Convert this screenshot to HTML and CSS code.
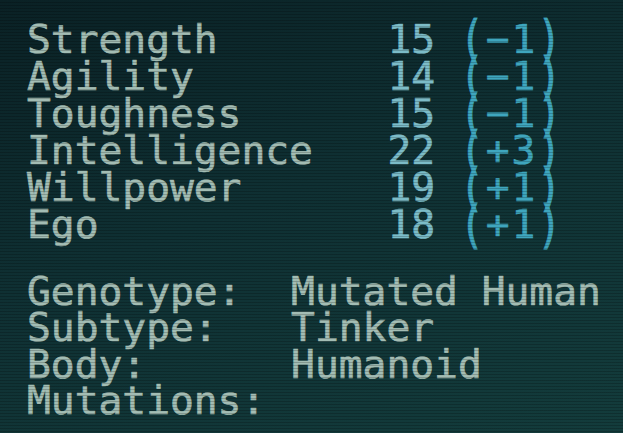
FILE: index.html
```html
<!DOCTYPE html>
<html>
<head>
<meta charset="utf-8">
<link rel="stylesheet" href="styles.css">
</head>
<body>
<main class="sheet">
  <section class="stats">
    <div class="label">Strength</div><div class="num">15</div><div class="mod"><span class="par">(</span>−1<span class="par">)</span></div>
    <div class="label">Agility</div><div class="num">14</div><div class="mod"><span class="par">(</span>−1<span class="par">)</span></div>
    <div class="label">Toughness</div><div class="num">15</div><div class="mod"><span class="par">(</span>−1<span class="par">)</span></div>
    <div class="label">Intelligence</div><div class="num">22</div><div class="mod"><span class="par">(</span>+3<span class="par">)</span></div>
    <div class="label">Willpower</div><div class="num">19</div><div class="mod"><span class="par">(</span>+1<span class="par">)</span></div>
    <div class="label">Ego</div><div class="num">18</div><div class="mod"><span class="par">(</span>+1<span class="par">)</span></div>
  </section>
  <section class="info">
    <div class="key">Genotype:</div><div class="val">Mutated Human</div>
    <div class="key">Subtype:</div><div class="val">Tinker</div>
    <div class="key">Body:</div><div class="val">Humanoid</div>
    <div class="key">Mutations:</div><div class="val"></div>
  </section>
</main>
<div class="scan"></div>
</body>
</html>
```
FILE: styles.css
```css
html, body {
  margin: 0;
  padding: 0;
  width: 623px;
  height: 433px;
  overflow: hidden;
}
body {
  background: linear-gradient(160deg, #0a2125 0%, #0f3033 45%, #133c3c 100%);
  font-family: "DejaVu Sans Mono", monospace;
  font-size: 39.6px;
  color: #a3bdb4;
  -webkit-text-stroke: 0.7px currentColor;
  position: relative;
}
.sheet {
  padding: 21px 0 0 27px;
}
.stats {
  display: grid;
  grid-template-columns: 15ch 3ch auto;
  line-height: 37px;
}
.num {
  color: #7cbcc8;
  padding-left: 3px;
}
.mod {
  color: #3fa6be;
  display: flex;
  align-items: center;
  letter-spacing: 2px;
  padding-left: 4px;
}
.par {
  display: inline-block;
  transform: scaleY(1.3);
}
.info {
  margin-top: 30px;
  display: grid;
  grid-template-columns: 11ch auto;
  line-height: 36.3px;
}
.val {
  padding-left: 2px;
}
.scan {
  position: absolute;
  inset: 0;
  pointer-events: none;
  background: repeating-linear-gradient(to bottom, rgba(0,0,0,0) 0px, rgba(0,0,0,0) 2px, rgba(0,0,0,0.2) 2px, rgba(0,0,0,0.2) 3px);
}
```
